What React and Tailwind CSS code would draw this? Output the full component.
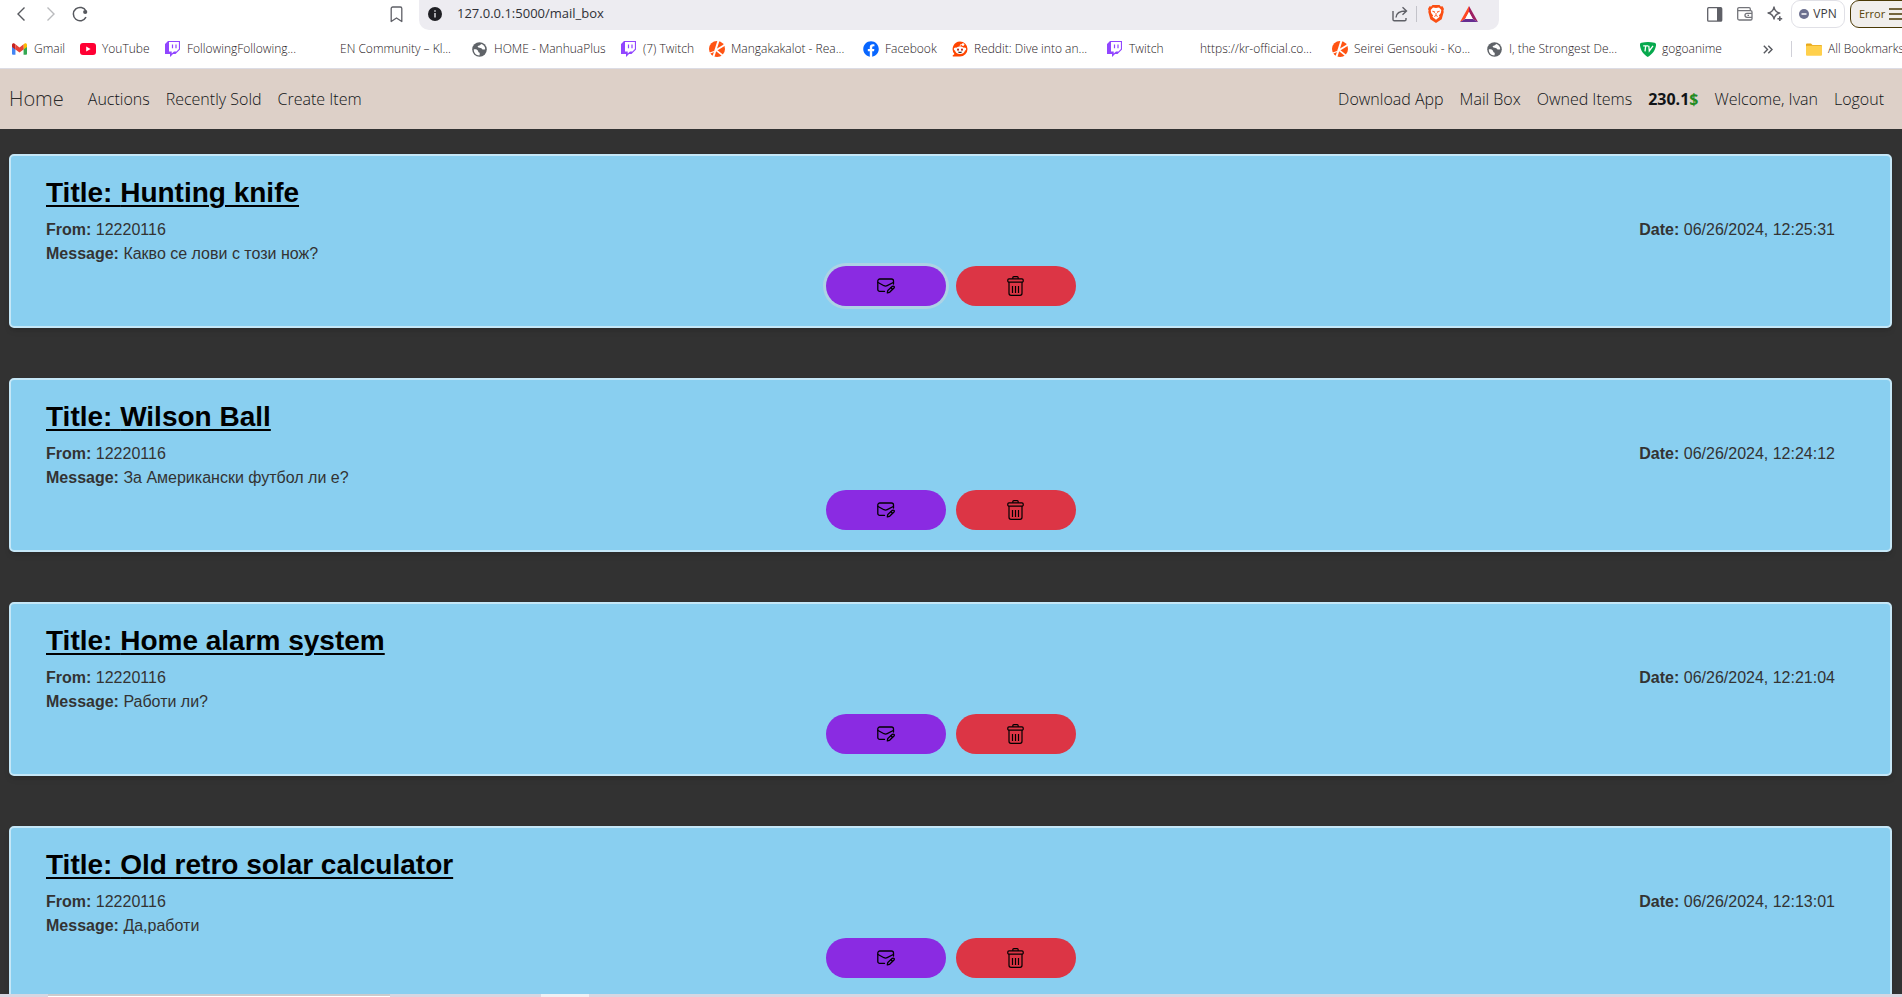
import React from "react";
import { FaFacebook } from "react-icons/fa";

const Back = ({ className, flip }) => (
  <svg className={className} width="10" height="16" viewBox="0 0 10 16" fill="none" stroke="currentColor" strokeWidth="1.4">
    <path d={flip ? "M1.5 1.5 8 8l-6.500 6.500" : "M8.500 1.500 2 8l6.500 6.500"} />
  </svg>
);

const Reload = () => (
  <svg width="16" height="16" viewBox="0 0 16 16" fill="none" stroke="#56585e" strokeWidth="1.5">
    <path d="M14 5A6.700 6.700 0 1 0 14 11.200" />
    <circle cx="13.200" cy="6" r="2.100" fill="#56585e" stroke="none" />
  </svg>
);

const BookmarkIcon = () => (
  <svg width="13" height="17" viewBox="0 0 13 17" fill="none" stroke="#5f6067" strokeWidth="1.300" strokeLinejoin="round">
    <path d="M1.200 2.500a1.500 1.500 0 0 1 1.500-1.500h7.600a1.500 1.500 0 0 1 1.500 1.500v13L6.500 12 1.200 15.500z" />
  </svg>
);

const Gmail = () => (
  <svg width="15" height="12" viewBox="0 0 24 18">
    <path d="M0 2.200V16.500A1.500 1.500 0 0 0 1.500 18H5.500V7z" fill="#4285f4" />
    <path d="M24 2.200V16.500A1.500 1.500 0 0 1 22.500 18H18.500V7z" fill="#34a853" />
    <path d="M0 5.800V2.500C0 0 2.600-.8 4.200.5L5.500 1.500V9.800z" fill="#c5221f" />
    <path d="M24 5.800V2.500C24 0 21.400-.8 19.800.5L18.500 1.500V9.800z" fill="#fbbc04" />
    <path d="M5.500 1.500 12 6.400 18.500 1.500V9.800L12 14.700 5.500 9.800z" fill="#ea4335" />
  </svg>
);

const YouTube = () => (
  <svg width="16" height="12" viewBox="0 0 16 12">
    <rect width="16" height="12" rx="3" fill="#ff0033" />
    <path d="M6.200 3.500v5L10.600 6z" fill="#fff" />
  </svg>
);

const Twitch = () => (
  <svg width="15" height="16" viewBox="0 0 15 16">
    <path d="M3 0H15V8.500L10.500 13H8L5 16V13H0V3z" fill="#9146ff" />
    <path d="M4 1.100H13.900V8L11.500 10.400H9L6.700 12.500V10.400H4z" fill="#fff" />
    <path d="M7.500 3.600v3.600M11 3.600v3.600" stroke="#9146ff" strokeWidth="1.200" />
  </svg>
);
const Facebook = () => <FaFacebook size={16} color="#0866ff" />;
const Reddit = () => (
  <svg width="17" height="16" viewBox="0 0 17 16">
    <path d="M8.500 0a8 8 0 1 1 0 16H1.200c-.6 0-.8-.6-.4-1l1.800-1.800A8 8 0 0 1 8.500 0z" fill="#ff4500" />
    <circle cx="3.600" cy="8" r="1.700" fill="#fff" />
    <circle cx="13.400" cy="8" r="1.700" fill="#fff" />
    <circle cx="11.700" cy="3.300" r="1.400" fill="#fff" />
    <path d="M8.500 5.500 9 3.300l2 .1" stroke="#fff" strokeWidth=".8" fill="none" />
    <ellipse cx="8.500" cy="9.300" rx="5.200" ry="4" fill="#fff" />
    <circle cx="6.400" cy="8.700" r="1.100" fill="#b3261e" />
    <circle cx="10.600" cy="8.700" r="1.100" fill="#b3261e" />
    <path d="M6.200 10.900h4.600a2.400 1.900 0 0 1-4.600 0z" fill="#222" />
  </svg>
);

const Globe = () => (
  <svg width="15" height="15" viewBox="0 0 15 15">
    <circle cx="7.500" cy="7.500" r="7.300" fill="#5f6368" />
    <path d="M1.800 7.300c2-.3 3.200.2 4 1.200.7 1 .2 1.700 1.300 1.900.9.200.8 1.700.3 3.100-3.300 0-5.800-2.600-5.600-6.200z" fill="#fff" />
    <path d="M9.300 2.100c-.8.700-1.400 1.500-2.700 1.600-1.200.1-1.200 1.300-.1 1.700 1.500.6 2.800.1 3.400 1.300.5 1 1.700 1 3.300.6.100-2.300-1.500-4.400-3.900-5.200z" fill="#fff" />
  </svg>
);

const Manga = () => (
  <svg width="16" height="16" viewBox="0 0 16 16">
    <circle cx="8" cy="8" r="8" fill="#ff5413" />
    <path d="M9.500-.5 4.200 16.500" stroke="#fff" strokeWidth="2" />
    <path d="M16.500 3.500 7 9.200 15 15.500" stroke="#fff" strokeWidth="1.700" fill="none" />
    <path d="M-.5 12.500 5 10.500" stroke="#fff" strokeWidth="1.200" />
  </svg>
);

const Gogo = () => (
  <svg width="16" height="15" viewBox="0 0 16 15">
    <path d="M1.500.8Q8-.6 14.500.8 16.300 1.200 16 3.500C15.300 8.500 12 12.500 7.800 15 3.500 12.500.600 8.500 0 3.500-.1 1.500.3 1 1.500.8z" fill="#06a94d" />
    <path d="M3.200 3.800h5M5.700 3.800 5 9.300M8.800 3.800 9.300 9l3.700-5.200" stroke="#fff" strokeWidth="1.300" fill="none" />
  </svg>
);

const Folder = () => (
  <svg width="16" height="13" viewBox="0 0 16 13">
    <path d="M0 1.500A1 1 0 0 1 1 .5h4l1.500 1.500H15a1 1 0 0 1 1 1V5H0z" fill="#e8a91c" />
    <rect y="2.800" width="16" height="10" rx="1" fill="#ffd04c" />
  </svg>
);

const Share = () => (
  <svg width="16" height="16" viewBox="0 0 16 16" fill="none" stroke="#5f6067" strokeWidth="1.400">
    <path d="M1 5v8.500A1.300 1.300 0 0 0 2.300 14.800h10.400a1.300 1.300 0 0 0 1.300-1.300V12" />
    <path d="M4 11.500C4.200 7.500 7 5 14 5M10.500 1.200 14.500 5l-4 3.800" />
  </svg>
);

const Brave = () => (
  <svg width="16" height="18" viewBox="0 0 16 18">
    <path d="M4.500 0h7l1.300 1.400 1.800-.1L16 4l-.6 1.500.3 1.500-2 7.200L8 18l-5.700-3.800-2-7.200.3-1.500L0 4l1.400-2.700 1.800.1z" fill="#fb4f14" />
    <path d="m8 3 3-.5L13.300 5l-.5 3-1.900 2.400.7 1.300L8 14.800l-3.600-3.100.7-1.300L3.200 8l-.5-3L5 2.500z" fill="#fff" />
    <path d="m4.300 6.200 2.300.5-.4 1.200M11.700 6.200l-2.300.5.4 1.200M8 8v2.500M6.200 11.500 8 10.500l1.800 1" stroke="#fb4f14" strokeWidth=".9" fill="none" />
  </svg>
);

const Bat = () => (
  <svg width="18" height="16" viewBox="0 0 18 16">
    <path d="M9 0 0 16l5.200-3L9 6z" fill="#ff4724" />
    <path d="M9 0l9 16-5.200-3L9 6z" fill="#9e1f63" />
    <path d="M0 16h18l-5.200-3H5.200z" fill="#662d91" />
    <path d="M9 6 5.200 13h7.600z" fill="#fff" />
  </svg>
);

const Panel = () => (
  <svg width="16" height="15" viewBox="0 0 16 15">
    <rect x=".7" y=".7" width="14" height="13.500" rx="1" fill="none" stroke="#5f6067" strokeWidth="1.300" />
    <rect x="10" y="1" width="5" height="13" fill="#5f6067" />
  </svg>
);

const Wallet = () => (
  <svg width="16" height="14" viewBox="0 0 16 14" fill="none" stroke="#73747a" strokeWidth="1.300">
    <path d="M13.300 3.500V2a1.300 1.300 0 0 0-1.300-1.300H2A1.300 1.300 0 0 0 .7 2v9.500a1.500 1.500 0 0 0 1.500 1.500h11.500a1.300 1.300 0 0 0 1.300-1.300V5A1.300 1.300 0 0 0 13.700 3.700H1" />
    <path d="M15 6.300H10a2 2 0 0 0 0 4h5M10.500 8.300h1.500" />
  </svg>
);

const Sparkle = () => (
  <svg width="16" height="16" viewBox="0 0 16 16" fill="none" stroke="#5f6067" strokeWidth="1.300" strokeLinejoin="round">
    <path d="M7 .8C7.600 4.500 9 6.200 12.800 7 9 7.800 7.600 9.500 7 13.200 6.400 9.500 5 7.800 1 7 5 6.200 6.400 4.500 7 .8z" />
    <path d="M12.800 10.300v4.800M10.400 12.700h4.800" strokeWidth="1.600" />
  </svg>
);

const MailEdit = () => (
  <svg width="18" height="16" viewBox="0 0 18 16" fill="none" stroke="#000" strokeWidth="1.300" strokeLinecap="round" strokeLinejoin="round">
    <path d="M7.500 13.400H2.800a2 2 0 0 1-2-2V3a2 2 0 0 1 2-2h11.700a2 2 0 0 1 2 2v3" />
    <path d="M1 4.500 7 7.700q1.600.8 3.200 0L16.300 4.500" />
    <path d="M10.300 14.800l.5-2.300 4.600-4.200q1-.5 1.600.2.600.8 0 1.500l-4.400 4.300z" />
    <path d="m14 9.800 1.500 1.500" />
  </svg>
);

const Trash = () => (
  <svg width="17" height="20" viewBox="0 0 17 20" fill="none" stroke="#000" strokeLinejoin="round">
    <path d="M5.800 2.800V1.700a1 1 0 0 1 1-1h3.400a1 1 0 0 1 1 1v1.100" strokeWidth="1.200" />
    <rect x=".8" y="2.900" width="15.400" height="3.300" rx="1.200" strokeWidth="1.200" />
    <path d="M2 6.300V17.300a2 2 0 0 0 2 2h9a2 2 0 0 0 2-2V6.300" strokeWidth="1.200" />
    <path d="M5.500 10v7M8.500 10v7M11.500 10v7" strokeWidth="1.200" />
  </svg>
);

const bookmarks = [
  { label: "Gmail", icon: Gmail, width: "w-[68px]" },
  { label: "YouTube", icon: YouTube, width: "w-[85px]" },
  { label: "FollowingFollowing...", icon: Twitch, width: "w-[153px]" },
  { label: "EN Community – Kl...", icon: null, width: "w-[154px]" },
  { label: "HOME - ManhuaPlus", icon: Globe, width: "w-[149px]" },
  { label: "(7) Twitch", icon: Twitch, width: "w-[88px]" },
  { label: "Mangakakalot - Rea...", icon: Manga, width: "w-[154px]" },
  { label: "Facebook", icon: Facebook, width: "w-[89px]" },
  { label: "Reddit: Dive into an...", icon: Reddit, width: "w-[155px]" },
  { label: "Twitch", icon: Twitch, width: "w-[71px]" },
  { label: "https://kr-official.co...", icon: null, width: "w-[154px]" },
  { label: "Seirei Gensouki - Ko...", icon: Manga, width: "w-[155px]" },
  { label: "I, the Strongest De...", icon: Globe, width: "w-[153px]" },
  { label: "gogoanime", icon: Gogo, width: "w-[123px]" },
];

const messages = [
  { title: "Hunting knife", from: "12220116", text: "Какво се лови с този нож?", date: "06/26/2024, 12:25:31", focused: true },
  { title: "Wilson Ball", from: "12220116", text: "За Американски футбол ли е?", date: "06/26/2024, 12:24:12" },
  { title: "Home alarm system", from: "12220116", text: "Работи ли?", date: "06/26/2024, 12:21:04" },
  { title: "Old retro solar calculator", from: "12220116", text: "Да,работи", date: "06/26/2024, 12:13:01" },
];

function Toolbar() {
  return (
    <div className="flex h-[30px] shrink-0 items-start">
      <div className="flex h-7 w-[419px] shrink-0 items-center pl-4">
        <button aria-label="Back" className="mr-5 text-[#56585e]"><Back /></button>
        <button aria-label="Forward" className="mr-4 text-[#b9babd]"><Back flip /></button>
        <button aria-label="Reload"><Reload /></button>
        <button aria-label="Bookmark this page" className="mr-4 ml-auto"><BookmarkIcon /></button>
      </div>
      <div className="flex h-[30px] min-w-0 flex-1 items-center rounded-b-[10px] bg-[#edecf1] pb-[2px] pl-[9px]">
        <svg width="14" height="14" viewBox="0 0 14 14" className="shrink-0">
          <circle cx="7" cy="7" r="7" fill="#1f1f24" />
          <path d="M7 6v4.500M7 3.300v1.500" stroke="#d8d8dc" strokeWidth="1.500" />
        </svg>
        <input aria-label="Address" defaultValue="127.0.0.1:5000/mail_box" className="ml-[15px] min-w-0 flex-1 bg-transparent text-[13px] text-[#2f3036] outline-none" />
        <button aria-label="Share"><Share /></button>
        <span className="mr-[11px] ml-2 h-4 w-px bg-[#c3c3ca]" />
        <button aria-label="Brave Shields" className="mr-4"><Brave /></button>
        <button aria-label="Rewards" className="mr-[21px]"><Bat /></button>
      </div>
      <div className="flex h-7 w-[403px] shrink-0 items-center overflow-hidden pl-[208px]">
        <button aria-label="Sidebar" className="mr-[14px] shrink-0"><Panel /></button>
        <button aria-label="Wallet" className="mr-[14px] shrink-0"><Wallet /></button>
        <button aria-label="Leo AI" className="mr-2 shrink-0"><Sparkle /></button>
        <button className="mr-[5px] flex h-7 w-[54px] shrink-0 items-center justify-center gap-1 rounded-[9px] border border-[#e0e0e6] text-xs text-[#3b3c42]">
          <svg width="10" height="10" viewBox="0 0 10 10">
            <circle cx="5" cy="5" r="5" fill="#6c708f" />
            <path d="M2.500 5h5" stroke="#fff" strokeWidth="1.500" />
          </svg>
          VPN
        </button>
        <button className="flex h-7 w-20 shrink-0 items-center gap-1 rounded-[9px] border border-[#4b3a05] bg-[#f1efec] pl-2 text-[11px] text-[#5a4508]">
          Error
          <svg width="16" height="12" viewBox="0 0 16 12" stroke="#4b3a05" strokeWidth="1.300">
            <path d="M0 1h16M0 6h16M0 11h16" />
          </svg>
        </button>
      </div>
    </div>
  );
}

function BookmarksBar() {
  return (
    <div className="flex h-[39px] shrink-0 items-center overflow-hidden border-b border-[#dcdce4] pl-3 text-xs font-light whitespace-nowrap text-[#1f2024]">
      {bookmarks.map(({ label, icon: Icon, width }, i) => (
        <a key={i} href="#" className={`${width} flex shrink-0 items-center gap-[6px]`}>
          <span className="flex w-4 shrink-0 items-center">{Icon && <Icon />}</span>
          {label}
        </a>
      ))}
      <button aria-label="More bookmarks" className="mr-[18px] shrink-0">
        <svg width="10" height="9" viewBox="0 0 10 9" fill="none" stroke="#56585e" strokeWidth="1.400">
          <path d="m.8.800 3.700 3.700L.8 8.200M5.300.800 9 4.500 5.300 8.200" />
        </svg>
      </button>
      <span className="mr-[14px] h-4 w-px shrink-0 bg-[#d0d0d8]" />
      <a href="#" className="flex shrink-0 items-center gap-[6px]"><Folder />All Bookmarks</a>
    </div>
  );
}

function SiteNav() {
  return (
    <nav className="flex h-[60px] shrink-0 items-center gap-4 bg-[#ddd0c8] pr-[18px] pl-[9px] text-base font-light whitespace-nowrap text-[#111417]">
      <a href="#" className="mr-2 text-xl text-[#2c2b2a]">Home</a>
      <a href="#">Auctions</a>
      <a href="#">Recently Sold</a>
      <a href="#">Create Item</a>
      <a href="#" className="ml-auto">Download App</a>
      <a href="#">Mail Box</a>
      <a href="#">Owned Items</a>
      <span className="font-bold">230.1<span className="text-[#228b22]">$</span></span>
      <a href="#">Welcome, Ivan</a>
      <a href="#">Logout</a>
    </nav>
  );
}

function MessageCard({ title, from, text, date, focused }) {
  return (
    <article className="shrink-0 rounded-[5px] border-2 border-[#c5e7f7] bg-[#89cff0] px-[35px] py-5 text-base text-[#333] shadow-md">
      <h2 className="mb-2 text-[28px] leading-[34px] font-bold text-black underline decoration-2 underline-offset-[3px]">Title: {title}</h2>
      <div className="flex justify-between pr-5">
        <p><strong>From:</strong> {from}</p>
        <p><strong>Date:</strong> {date}</p>
      </div>
      <p><strong>Message:</strong> {text}</p>
      <div className="flex justify-center gap-[10px]">
        <button
          aria-label="Reply"
          className={`flex h-10 w-[120px] items-center justify-center rounded-full bg-[#8a2be2] ${focused ? "ring-3 ring-[#add3e5]" : ""}`}
        >
          <MailEdit />
        </button>
        <button aria-label="Delete" className="flex h-10 w-[120px] items-center justify-center rounded-full bg-[#dc3545]">
          <Trash />
        </button>
      </div>
    </article>
  );
}

export default function App() {
  return (
    <div className="flex h-screen flex-col overflow-hidden bg-white font-['Open_Sans','Noto_Sans',sans-serif]">
      <Toolbar />
      <BookmarksBar />
      <SiteNav />
      <main className="flex min-h-0 flex-1 flex-col gap-[50px] overflow-hidden bg-[#323232] pt-[25px] pr-[10px] pl-[9px] font-['Liberation_Sans',Arial,sans-serif]">
        {messages.map((m) => <MessageCard key={m.title} {...m} />)}
      </main>
      <div className="flex h-[3px] shrink-0 bg-[#d9d6e1]">
        <div className="ml-12 w-[342px] border-t-2 border-[#cccacc] bg-white" />
        <div className="ml-[151px] w-12 bg-[#f0eff2]" />
      </div>
    </div>
  );
}
